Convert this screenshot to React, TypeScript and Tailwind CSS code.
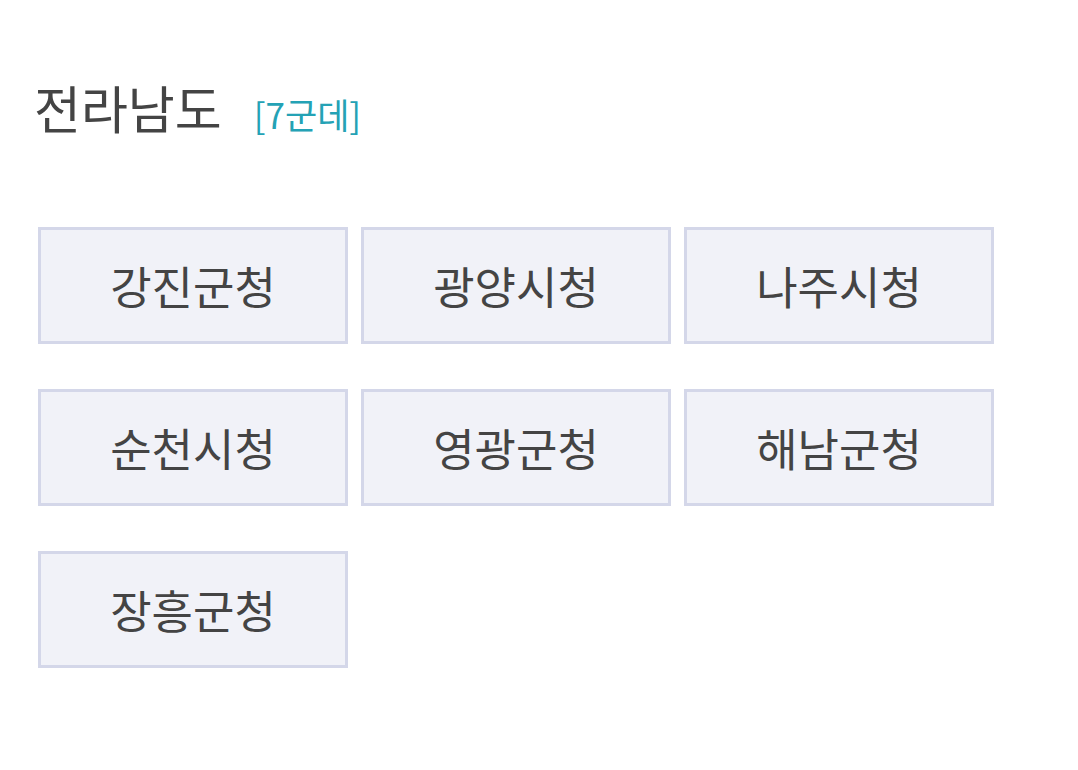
const offices = ['강진군청', '광양시청', '나주시청', '순천시청', '영광군청', '해남군청', '장흥군청']

export default function App() {
  return (
    <div className="min-h-screen bg-white font-['Noto_Sans_CJK_KR','Noto_Sans',sans-serif]">
      <div className="pl-[38px] pt-[82px]">
        {/* Title */}
        <h2 className="flex items-baseline -ml-[4px] leading-none">
          <span className="text-[51px] text-[#444444]">전라남도</span>
          <span className="ml-[32px] text-[35px] text-[#24a2b5]">[7군데]</span>
        </h2>

        {/* Offices */}
        <div className="mt-[94px] grid grid-cols-[repeat(3,310px)] gap-x-[13px] gap-y-[45px]">
          {offices.map((name) => (
            <div
              key={name}
              className="h-[117px] flex items-center justify-center border-[3px] border-[#d4d7e9] bg-[#f1f2f8] text-[45px] text-[#444444]"
            >
              {name}
            </div>
          ))}
        </div>
      </div>
    </div>
  )
}
